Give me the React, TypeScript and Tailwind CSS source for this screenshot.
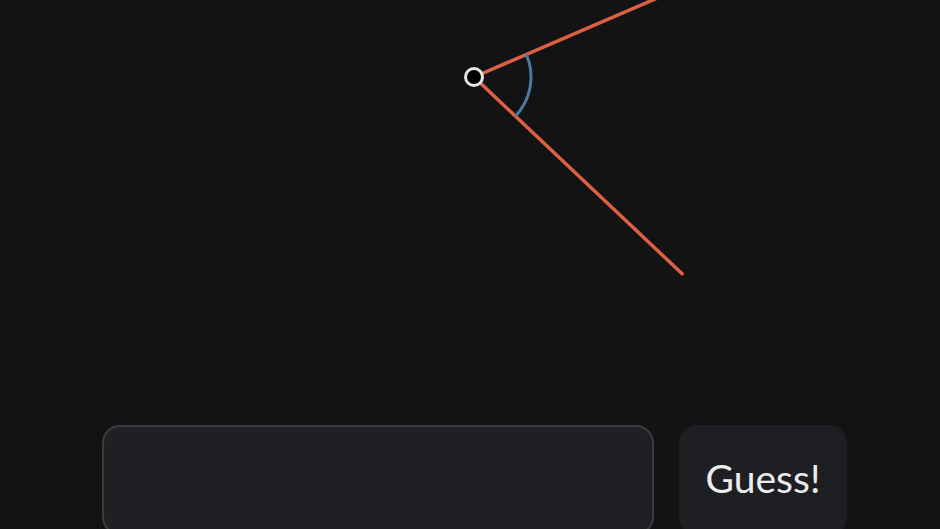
import { useState } from "react";

const VX = 474;
const VY = 77;
const R = 57;

function rayEnd(angleDeg: number, len: number) {
  const a = (angleDeg * Math.PI) / 180;
  return { x: VX + Math.cos(a) * len, y: VY + Math.sin(a) * len };
}

function AngleCanvas() {
  const upper = -23.3;
  const lower = 43.4;
  const u = rayEnd(upper, 220);
  const l = rayEnd(lower, 286.5);
  const a1 = rayEnd(upper, R);
  const a2 = rayEnd(lower, R);
  return (
    <svg width={940} height={410} viewBox="0 0 940 410" className="block shrink-0">
      <line x1={VX} y1={VY} x2={u.x} y2={u.y} stroke="#dc6142" strokeWidth={3.5} strokeLinecap="round" />
      <line x1={VX} y1={VY} x2={l.x} y2={l.y} stroke="#dc6142" strokeWidth={3.5} strokeLinecap="round" />
      <path
        d={`M ${a1.x} ${a1.y} A ${R} ${R} 0 0 1 ${a2.x} ${a2.y}`}
        fill="none"
        stroke="#4a79a3"
        strokeWidth={3}
      />
      <circle cx={VX} cy={VY} r={8.5} fill="#000" stroke="#e6e6e6" strokeWidth={3} />
    </svg>
  );
}

export default function App() {
  const [guess, setGuess] = useState("");
  return (
    <div className="h-[529px] w-[940px] overflow-hidden bg-[#131313] font-['Lato',sans-serif]">
      <AngleCanvas />
      <div className="mt-[15px] flex gap-[25px] pl-[102px]">
        <input
          value={guess}
          onChange={(e) => setGuess(e.target.value)}
          className="h-[110px] w-[552px] rounded-[18px] border-2 border-[#3b3c40] bg-[#1f2024] px-5 text-[38px] text-[#e8e8e8] outline-none"
        />
        <button
          type="button"
          className="h-[110px] w-[168px] rounded-[18px] bg-[#1e1f23] pb-[4px] text-[39px] text-[#ececec]"
        >
          Guess!
        </button>
      </div>
    </div>
  );
}
